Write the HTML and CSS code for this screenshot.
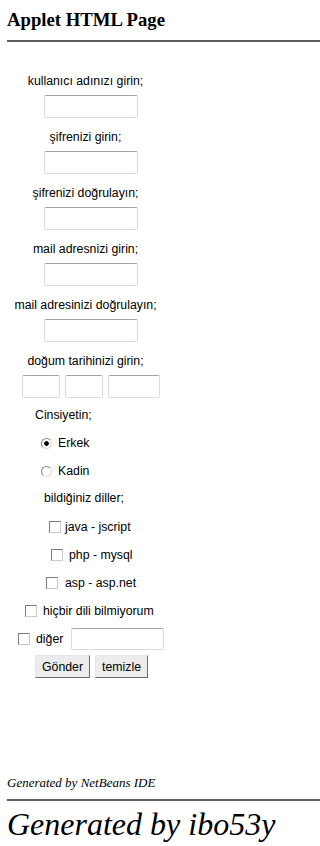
FILE: index.html
```html
<!DOCTYPE html>
<html lang="tr">
<head>
<meta charset="utf-8">
<title>Applet HTML Page</title>
<link rel="stylesheet" href="styles.css">
</head>
<body>
<h3 class="title">Applet HTML Page</h3>
<hr class="rule">
<form class="form">
  <p class="label">kullanıcı adınızı girin;</p>
  <input class="field" type="text">
  <p class="label">şifrenizi girin;</p>
  <input class="field" type="password">
  <p class="label">şifrenizi doğrulayın;</p>
  <input class="field" type="password">
  <p class="label">mail adresnizi girin;</p>
  <input class="field" type="text">
  <p class="label">mail adresinizi doğrulayın;</p>
  <input class="field" type="text">
  <p class="label">doğum tarihinizi girin;</p>
  <div class="date-row">
    <input class="field field--day" type="text">
    <input class="field field--day" type="text">
    <input class="field field--year" type="text">
  </div>
  <p class="label label--gender">Cinsiyetin;</p>
  <label class="choice choice--erkek"><input class="radio" type="radio" name="cinsiyet" checked>Erkek</label>
  <label class="choice choice--kadin"><input class="radio" type="radio" name="cinsiyet">Kadin</label>
  <p class="label label--langs">bildiğiniz diller;</p>
  <label class="choice choice--java"><input class="check" type="checkbox">java - jscript</label>
  <label class="choice choice--php"><input class="check" type="checkbox">php - mysql</label>
  <label class="choice choice--asp"><input class="check" type="checkbox">asp - asp.net</label>
  <label class="choice choice--none"><input class="check" type="checkbox">hiçbir dili bilmiyorum</label>
  <div class="other-row">
    <label class="choice choice--other"><input class="check" type="checkbox">diğer</label>
    <input class="field field--other" type="text">
  </div>
  <div class="buttons">
    <button class="btn" type="submit">Gönder</button>
    <button class="btn" type="reset">temizle</button>
  </div>
</form>
<p class="generated">Generated by NetBeans IDE</p>
<hr class="rule rule--footer">
<p class="credit">Generated by ibo53y</p>
</body>
</html>
```

FILE: styles.css
```css
html, body {
  background: #ffffff;
}
body {
  margin: 0;
  padding: 0 0 0 7px;
  font-family: "Liberation Serif", "Times New Roman", serif;
  color: #000;
}
.title {
  margin: 9px 0 0;
  font: 700 18.72px/22px "Liberation Serif", "Times New Roman", serif;
}
.rule {
  margin: 9px 0 0;
  height: 2px;
  border: 0;
  background: #5e5e5e;
}
.form {
  width: 157px;
  margin: 32px 0 0;
  font: 12.3px/14px "Liberation Sans", Arial, sans-serif;
  color: #000;
}
.label {
  margin: 0;
  height: 14px;
  text-align: center;
  white-space: nowrap;
}
.field {
  display: block;
  box-sizing: border-box;
  width: 94px;
  height: 23px;
  margin: 7px 0 12px 37px;
  padding: 0 2px;
  border: 1px solid;
  border-color: #a3a7ad #dcd9e4 #dcd9e4 #dcd9e4;
  border-radius: 2px;
  background: #fff;
  font: inherit;
}
.date-row {
  display: flex;
  gap: 5px;
  margin: 7px 0 10px 15px;
}
.date-row .field {
  margin: 0;
}
.field--day {
  width: 38px;
}
.field--year {
  width: 52px;
}
.label--gender {
  text-align: left;
  margin-left: 28px;
}
.label--langs {
  text-align: left;
  margin-left: 37px;
  margin-top: 13px;
}
.choice {
  display: flex;
  align-items: center;
  gap: 2px;
  height: 14px;
  white-space: nowrap;
}
.choice--erkek {
  margin: 14px 0 0 34px;
}
.choice--kadin {
  margin: 14px 0 0 34px;
}
.choice--java {
  margin: 15px 0 0 42px;
}
.choice--php {
  margin: 14px 0 0 44px;
  gap: 4px;
}
.choice--asp {
  margin: 14px 0 0 39px;
  gap: 5px;
}
.choice--none {
  margin: 14px 0 0 18px;
  gap: 4px;
}
.other-row {
  display: flex;
  align-items: center;
  height: 22px;
  margin: 10px 0 0 11px;
}
.choice--other {
  margin: 0;
  gap: 4px;
}
.field--other {
  width: 93px;
  height: 22px;
  margin: 0 0 0 8px;
}
.radio {
  appearance: none;
  -webkit-appearance: none;
  box-sizing: border-box;
  width: 11px;
  height: 11px;
  margin: 0 4px 0 0;
  border: 1px solid;
  border-color: #848484 #dadada #dadada #848484;
  border-radius: 50%;
  background: #fff;
}
.radio:checked {
  background: radial-gradient(circle, #000 0 2px, #fff 2.6px);
}
.check {
  appearance: none;
  -webkit-appearance: none;
  box-sizing: border-box;
  width: 12px;
  height: 12px;
  margin: 0 2px 0 0;
  border: 1px solid;
  border-color: #7c7c7c #c9c9c9 #c9c9c9 #7c7c7c;
  border-radius: 0;
  background: #fff;
}
.buttons {
  display: flex;
  gap: 5px;
  margin: 5px 0 0 28px;
}
.btn {
  box-sizing: border-box;
  height: 23px;
  padding: 0 6px;
  border: 1px solid;
  border-color: #e6e6e6 #6a6a6a #6a6a6a #e6e6e6;
  border-radius: 0;
  background: #ececec;
  font: 12.3px/14px "Liberation Sans", Arial, sans-serif;
  color: #000;
}
.generated {
  margin: 97px 0 0;
  font: italic 13px/15px "Liberation Serif", "Times New Roman", serif;
}
.rule--footer {
  margin-top: 9px;
}
.credit {
  margin: 5px 0 0;
  font: italic 32px/36px "Liberation Serif", "Times New Roman", serif;
}
```
